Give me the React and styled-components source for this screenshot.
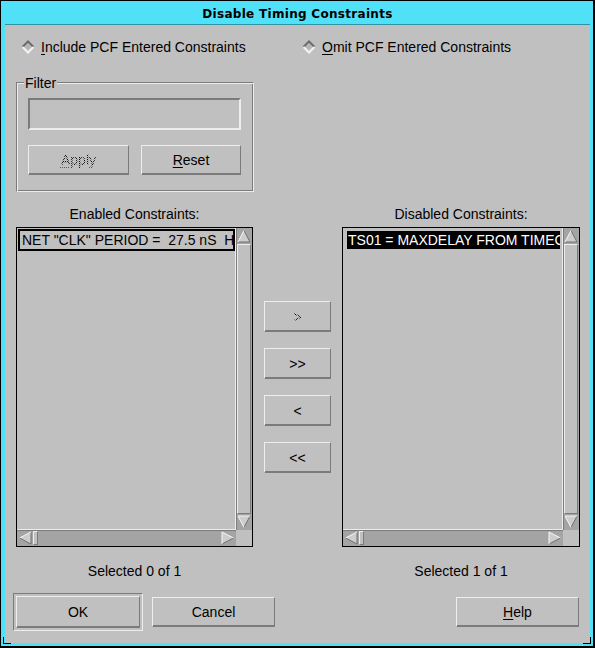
import React from 'react';
import styled, { createGlobalStyle } from 'styled-components';

const FACE = '#c0c0c0';
const LIGHT = '#ededed';
const SHADOW = '#7b7b7b';
const TROUGH = '#a4a4a4';
const CYAN = '#50e0f8';

const GlobalStyle = createGlobalStyle`
  html, body { margin: 0; padding: 0; background: #000; }
  body { font-family: "Liberation Sans", Arial, sans-serif; color: #000; }
  * { box-sizing: border-box; }
`;

const Frame = styled.div`
  width: 595px;
  height: 648px;
  background: #000;
  padding: 1px 2px 2px 1px;
`;

const Border = styled.div`
  position: relative;
  height: 100%;
  background: ${CYAN};
  padding: 0 3px 3px 4px;
  display: flex;
  flex-direction: column;
`;

const CornerMark = styled.span`
  position: absolute;
  background: #000;
  ${p => p.$css}
`;

const TitleBar = styled.div`
  height: 24px;
  border-bottom: 1px solid #2c95a6;
  display: flex;
  align-items: center;
  justify-content: center;
  font-family: "DejaVu Sans", sans-serif;
  font-weight: bold;
  font-size: 12px;
  letter-spacing: 0.3px;
  padding-top: 2px;
`;

const Body = styled.div`
  flex: 1;
  background: ${FACE};
  display: flex;
  flex-direction: column;
  font-size: 14px;
`;

const RadioRow = styled.div`
  display: grid;
  grid-template-columns: 281px auto;
  padding-left: 16px;
  height: 44px;
  align-items: center;
`;

const Radio = styled.label`
  display: flex;
  align-items: center;
  gap: 6px;
  line-height: 16px;
`;

const Mnemonic = styled.span`
  text-decoration: underline;
  text-underline-offset: 2px;
  text-decoration-thickness: 1px;
  ${p => p.$disabled && 'text-decoration-color: #5a5a5a; text-decoration-style: dotted;'}
`;

const Diamond = () => (
  <svg width="14" height="14" viewBox="0 0 14 14" style={{ display: 'block' }}>
    <polygon points="7,1 13,7 7,13 1,7" fill={FACE} />
    <polyline points="1.5,7 7,1.5 12.5,7" fill="none" stroke="#6a6a6a" strokeWidth="2" />
    <polyline points="1.5,7 7,12.5 12.5,7" fill="none" stroke="#f2f2f2" strokeWidth="2" />
    <polygon points="7,4.2 9.8,7 7,9.8 4.2,7" fill="#b4b4b4" />
  </svg>
);

const FilterGroup = styled.div`
  position: relative;
  margin: 13px 0 0 11px;
  width: 238px;
  height: 110px;
  border: 1px solid;
  border-color: ${SHADOW} ${LIGHT} ${LIGHT} ${SHADOW};
  box-shadow: inset 1px 1px 0 ${LIGHT}, inset -1px -1px 0 ${SHADOW};
  padding: 15px 11px 0 11px;
`;

const GroupLabel = styled.span`
  position: absolute;
  top: -8px;
  left: 7px;
  padding: 0 1px;
  background: ${FACE};
  line-height: 16px;
`;

const TextField = styled.div`
  width: 213px;
  height: 32px;
  border: 2px solid;
  border-color: ${SHADOW} ${LIGHT} ${LIGHT} ${SHADOW};
  background: ${FACE};
`;

const FilterButtons = styled.div`
  display: flex;
  gap: 12px;
  margin-top: 15px;
`;

const Button = styled.button`
  width: ${p => p.$w}px;
  height: ${p => p.$h}px;
  padding: 0;
  margin: 0;
  background: ${FACE};
  border: 1px solid;
  border-color: ${LIGHT} ${SHADOW} ${SHADOW} ${LIGHT};
  box-shadow: inset 0 -1px 0 ${SHADOW};
  font-family: "Liberation Sans", Arial, sans-serif;
  font-size: 14px;
  color: #000;
  display: flex;
  align-items: center;
  justify-content: center;
`;

const Stipple = styled.span`
  background: repeating-conic-gradient(#111 0 25%, transparent 0 50%) 0 0 / 2px 2px;
  -webkit-background-clip: text;
  background-clip: text;
  color: transparent;
`;

const DefaultRing = styled.div`
  width: 130px;
  height: 38px;
  padding: 2px;
  border: 1px solid;
  border-color: ${SHADOW} ${LIGHT} ${LIGHT} ${SHADOW};
  display: flex;
`;

const ListsGrid = styled.div`
  display: grid;
  grid-template-columns: 237px 67px 238px;
  column-gap: 11px;
  padding-left: 11px;
  margin-top: 14px;
`;

const ColumnLabel = styled.div`
  grid-column: ${p => p.$col};
  text-align: center;
  line-height: 16px;
  margin-bottom: 5px;
`;

const CountLabel = styled.div`
  grid-column: ${p => p.$col};
  text-align: center;
  line-height: 16px;
  margin-top: 16px;
`;

const ListBox = styled.div`
  grid-column: ${p => p.$col};
  height: 320px;
  border: 1px solid #000;
  background: ${FACE};
  display: grid;
  grid-template-columns: 1fr 16px;
  grid-template-rows: 1fr 16px;
  min-width: 0;
`;

const ListContent = styled.div`
  overflow: hidden;
  padding: 3px 2px 0 3px;
  border-right: 1px solid ${LIGHT};
  border-bottom: 1px solid ${LIGHT};
  min-width: 0;
`;

const ListItem = styled.div`
  height: 18px;
  line-height: 18px;
  padding-left: ${p => (p.$focused ? 2 : 1)}px;
  white-space: pre;
  overflow: hidden;
  outline: ${p => (p.$focused ? '2px solid #000' : 'none')};
  background: ${p => (p.$selected ? '#000' : 'transparent')};
  color: ${p => (p.$selected ? '#fff' : '#000')};
  margin-left: ${p => (p.$selected ? 1 : 0)}px;
`;

const VScroll = styled.div`
  background: ${TROUGH};
  border-left: 1px solid ${SHADOW};
  display: flex;
  flex-direction: column;
  padding: 1px 1px 1px 0;
  gap: 1px;
`;

const HScroll = styled.div`
  background: ${TROUGH};
  border-top: 1px solid ${SHADOW};
  display: flex;
  padding: 0 1px 1px 1px;
  gap: 1px;
  min-width: 0;
`;

const Thumb = styled.div`
  background: ${FACE};
  border: 1px solid;
  border-color: ${LIGHT} ${SHADOW} ${SHADOW} ${LIGHT};
  ${p => (p.$vertical ? 'flex: 1;' : `width: ${p.$size}px;`)}
`;

const Spacer = styled.div`
  flex: 1;
`;

const Corner = styled.div`
  background: ${FACE};
`;

const Arrow = ({ dir }) => {
  const pts = {
    up: { fill: '7,1.5 13,13 1,13', light: '1,13 7,1.5', dark: '7,1.5 13,13 1,13' },
    down: { fill: '1,1 13,1 7,12.5', light: '7,12.5 1,1 13,1', dark: '13,1 7,12.5' },
    left: { fill: '1.5,7 13,1 13,13', light: '13,1 1.5,7', dark: '1.5,7 13,13 13,1' },
    right: { fill: '1,1 12.5,7 1,13', light: '1,13 1,1 12.5,7', dark: '12.5,7 1,13' },
  }[dir];
  return (
    <svg width="14" height="14" viewBox="0 0 14 14" style={{ flex: 'none', display: 'block' }}>
      <polygon points={pts.fill} fill="#cdcdcd" />
      <polyline points={pts.dark} fill="none" stroke="#707070" strokeWidth="1" />
      <polyline points={pts.light} fill="none" stroke="#f6f6f6" strokeWidth="1" />
    </svg>
  );
};

const ScrollList = ({ col, children }) => (
  <ListBox $col={col}>
    <ListContent>{children}</ListContent>
    <VScroll>
      <Arrow dir="up" />
      <Thumb $vertical />
      <Arrow dir="down" />
    </VScroll>
    <HScroll>
      <Arrow dir="left" />
      <Thumb $size={5} />
      <Spacer />
      <Arrow dir="right" />
    </HScroll>
    <Corner />
  </ListBox>
);

const MoveColumn = styled.div`
  grid-column: 2;
  display: flex;
  flex-direction: column;
  justify-content: center;
  gap: 16px;
`;

const Footer = styled.div`
  display: flex;
  align-items: center;
  gap: 9px;
  padding: 0 11px 0 8px;
  margin-top: 14px;
`;

const HelpSlot = styled.div`
  margin-left: auto;
`;

export default function App() {
  return (
    <>
      <GlobalStyle />
      <Frame>
        <Border>
          <CornerMark $css="left: 2px; bottom: 3px; width: 1px; height: 6px;" />
          <CornerMark $css="left: 2px; bottom: 2px; width: 8px; height: 1px;" />
          <CornerMark $css="right: 2px; bottom: 3px; width: 1px; height: 6px;" />
          <CornerMark $css="right: 2px; bottom: 2px; width: 8px; height: 1px;" />
          <TitleBar>Disable Timing Constraints</TitleBar>
          <Body>
            <RadioRow>
              <Radio>
                <Diamond />
                <span><Mnemonic>I</Mnemonic>nclude PCF Entered Constraints</span>
              </Radio>
              <Radio>
                <Diamond />
                <span><Mnemonic>O</Mnemonic>mit PCF Entered Constraints</span>
              </Radio>
            </RadioRow>

            <FilterGroup>
              <GroupLabel>Filter</GroupLabel>
              <TextField />
              <FilterButtons>
                <Button $w={101} $h={30} disabled>
                  <Stipple><Mnemonic $disabled>A</Mnemonic>pply</Stipple>
                </Button>
                <Button $w={100} $h={30}>
                  <span><Mnemonic>R</Mnemonic>eset</span>
                </Button>
              </FilterButtons>
            </FilterGroup>

            <ListsGrid>
              <ColumnLabel $col={1}>Enabled Constraints:</ColumnLabel>
              <ColumnLabel $col={3}>Disabled Constraints:</ColumnLabel>

              <ScrollList col={1}>
                <ListItem $focused>{'NET "CLK" PERIOD =  27.5 nS  HIGH 50%'}</ListItem>
              </ScrollList>
              <MoveColumn>
                <Button $w={67} $h={31} disabled><Stipple>&gt;</Stipple></Button>
                <Button $w={67} $h={31}>&gt;&gt;</Button>
                <Button $w={67} $h={31}>&lt;</Button>
                <Button $w={67} $h={31}>&lt;&lt;</Button>
              </MoveColumn>
              <ScrollList col={3}>
                <ListItem $selected>{'TS01 = MAXDELAY FROM TIMEGRP "CLKS" TO TIMEGRP "PADS" 20 nS'}</ListItem>
              </ScrollList>

              <CountLabel $col={1}>Selected 0 of 1</CountLabel>
              <CountLabel $col={3}>Selected 1 of 1</CountLabel>
            </ListsGrid>

            <Footer>
              <DefaultRing>
                <Button $w={124} $h={32}>OK</Button>
              </DefaultRing>
              <Button $w={123} $h={30}>Cancel</Button>
              <HelpSlot>
                <Button $w={123} $h={30}><span><Mnemonic>H</Mnemonic>elp</span></Button>
              </HelpSlot>
            </Footer>
          </Body>
        </Border>
      </Frame>
    </>
  );
}
